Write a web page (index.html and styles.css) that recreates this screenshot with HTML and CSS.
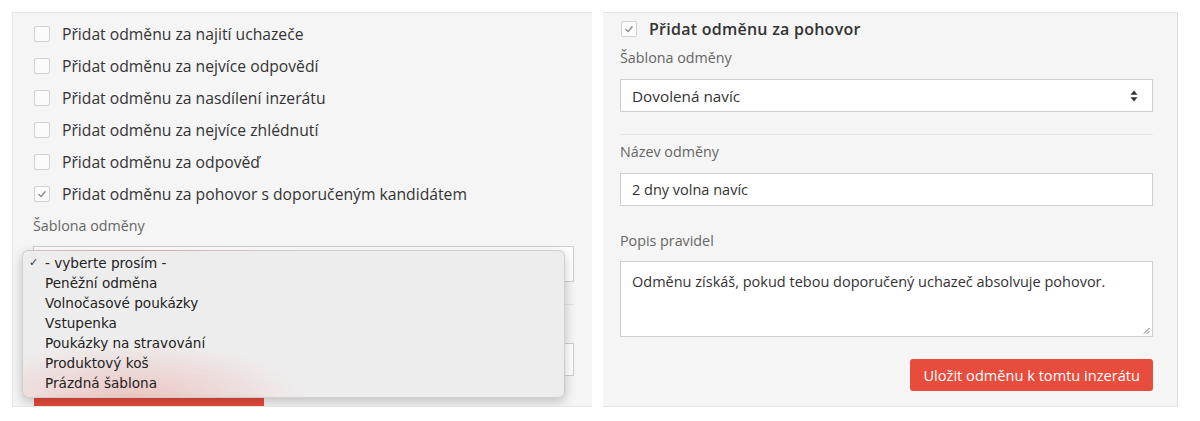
FILE: index.html
```html
<!DOCTYPE html>
<html lang="cs">
<head>
<meta charset="utf-8">
<title>Odměny</title>
<link rel="stylesheet" href="styles.css">
</head>
<body>
<div class="wrap">
  <section class="panel panel-left">
    <ul class="checks">
      <li class="check-row"><span class="box"></span>Přidat odměnu za najití uchazeče</li>
      <li class="check-row"><span class="box"></span>Přidat odměnu za nejvíce odpovědí</li>
      <li class="check-row"><span class="box"></span>Přidat odměnu za nasdílení inzerátu</li>
      <li class="check-row"><span class="box"></span>Přidat odměnu za nejvíce zhlédnutí</li>
      <li class="check-row"><span class="box"></span>Přidat odměnu za odpověď</li>
      <li class="check-row"><span class="box checked"><svg viewBox="0 0 16 16" width="16" height="16"><path d="M4.5 8.5 L7 11 L11.5 5.5" fill="none" stroke="#8a8a8a" stroke-width="1.6" stroke-linecap="round" stroke-linejoin="round"/></svg></span>Přidat odměnu za pohovor s doporučeným kandidátem</li>
    </ul>
    <div class="label label-left">Šablona odměny</div>
    <div class="field select select-left"></div>
    <div class="sep"></div>
    <div class="label-spacer"></div>
    <div class="field"></div>
    <div class="btn btn-left"></div>

    <div class="menu">
      <div class="menu-item selected"><span class="tick">✓</span>- vyberte prosím -</div>
      <div class="menu-item">Peněžní odměna</div>
      <div class="menu-item">Volnočasové poukázky</div>
      <div class="menu-item">Vstupenka</div>
      <div class="menu-item">Poukázky na stravování</div>
      <div class="menu-item">Produktový koš</div>
      <div class="menu-item">Prázdná šablona</div>
    </div>
  </section>

  <section class="panel panel-right">
    <div class="title-row"><span class="box checked"><svg viewBox="0 0 16 16" width="16" height="16"><path d="M4.5 8.5 L7 11 L11.5 5.5" fill="none" stroke="#8a8a8a" stroke-width="1.6" stroke-linecap="round" stroke-linejoin="round"/></svg></span><span class="title">Přidat odměnu za pohovor</span></div>
    <div class="label">Šablona odměny</div>
    <div class="field select">
      <span class="select-text">Dovolená navíc</span>
      <svg class="arrows" viewBox="0 0 8 12" width="8" height="12"><path d="M4 0.5 L7.5 4.8 L0.5 4.8 Z M4 11.5 L7.5 7.2 L0.5 7.2 Z" fill="#333"/></svg>
    </div>
    <div class="sep"></div>
    <div class="label">Název odměny</div>
    <div class="field"><span>2 dny volna navíc</span></div>
    <div class="label label-gap">Popis pravidel</div>
    <div class="field area"><span>Odměnu získáš, pokud tebou doporučený uchazeč absolvuje pohovor.</span>
      <svg class="grip" viewBox="0 0 8 8" width="8" height="8"><path d="M7.5 2 L2 7.5 M7.5 5 L5 7.5" stroke="#777" stroke-width="1"/></svg>
    </div>
    <div class="actions"><div class="btn">Uložit odměnu k tomtu inzerátu</div></div>
  </section>
</div>
</body>
</html>
```
FILE: styles.css
```css
* { box-sizing: border-box; }
html, body {
  margin: 0;
  padding: 0;
  background: #ffffff;
  font-family: "Open Sans", "Noto Sans", sans-serif;
  color: #3a3a3a;
}
.wrap {
  display: flex;
  gap: 11px;
  padding: 12px 22px 0 12px;
  height: 407px;
}
.panel {
  background: #f5f5f5;
  border-top: 1px solid #e4e4e4;
  border-bottom: 1px solid #e4e4e4;
  overflow: hidden;
  height: 395px;
}
.panel-left {
  position: relative;
  width: 580px;
  border-left: 1px solid #e4e4e4;
  padding: 5px 18px 0 20px;
}
.panel-right {
  flex: 1;
  border-right: 1px solid #dedede;
  padding: 4px 24px 0 17px;
}
.checks {
  list-style: none;
  margin: 0;
  padding: 0;
}
.check-row {
  display: flex;
  align-items: center;
  height: 32px;
  font-size: 15.7px;
  color: #333;
  padding-left: 1px;
}
.box {
  width: 16px;
  height: 16px;
  border: 1px solid #d2d2d2;
  background: #fbfbfb;
  border-radius: 2px;
  margin-right: 12px;
  flex: none;
  display: flex;
  align-items: center;
  justify-content: center;
}
.box svg { display: block; width: 14px; height: 14px; }
.label {
  font-size: 14.3px;
  color: #666;
  line-height: 20px;
  margin-bottom: 11px;
}
.label-left { margin-top: 6px; margin-bottom: 10px; }
.label-spacer { height: 20px; margin-bottom: 11px; }
.label-gap { margin-top: 25px; margin-bottom: 10px; }
.field {
  background: #fff;
  border: 1px solid #cfcfcf;
  height: 33px;
  display: flex;
  align-items: center;
  padding: 0 11px;
  font-size: 14.5px;
  color: #333;
  position: relative;
}
.select { justify-content: space-between; }
.select-text { font-size: 15.3px; }
.select-left { height: 36px; }
.arrows { margin-right: 3px; }
.area {
  height: 76px;
  align-items: flex-start;
  padding-top: 10px;
}
.grip { position: absolute; right: 2px; bottom: 2px; }
.sep {
  height: 1px;
  background: #e6e6e6;
  margin: 22px 0 7px;
}
.title-row {
  display: flex;
  align-items: center;
  height: 22px;
  margin-top: 1px;
  margin-bottom: 8px;
}
.title-row .box { margin-right: 12px; margin-left: 1px; }
.title {
  font-size: 16px;
  font-weight: 600;
  color: #333;
  letter-spacing: 0.25px;
}
.actions {
  display: flex;
  justify-content: flex-end;
  margin-top: 22px;
}
.btn {
  background: #e74c3c;
  color: #fff;
  font-size: 14.6px;
  height: 32px;
  line-height: 32px;
  padding: 0 13px;
  border-radius: 3px;
  white-space: nowrap;
}
.btn-left {
  width: 230px;
  margin-top: 18px;
  margin-left: 1px;
}
.menu {
  position: absolute;
  left: 9px;
  top: 237px;
  width: 543px;
  height: 148px;
  border-radius: 6px;
  border: 1px solid rgba(0,0,0,0.12);
  background:
    radial-gradient(ellipse 170px 55px at 110px 100%, rgba(228,88,74,0.26), rgba(228,88,74,0) 100%),
    rgba(237,236,236,0.97);
  box-shadow: 0 4px 12px rgba(0,0,0,0.22);
  padding-top: 2px;
  font-family: "DejaVu Sans", "Noto Sans", sans-serif;
}
.menu-item {
  height: 20px;
  line-height: 20px;
  font-size: 13.6px;
  color: #222;
  padding-left: 22px;
  position: relative;
}
.tick {
  position: absolute;
  left: 6px;
  top: 0;
  font-size: 11px;
  color: #333;
}
```
